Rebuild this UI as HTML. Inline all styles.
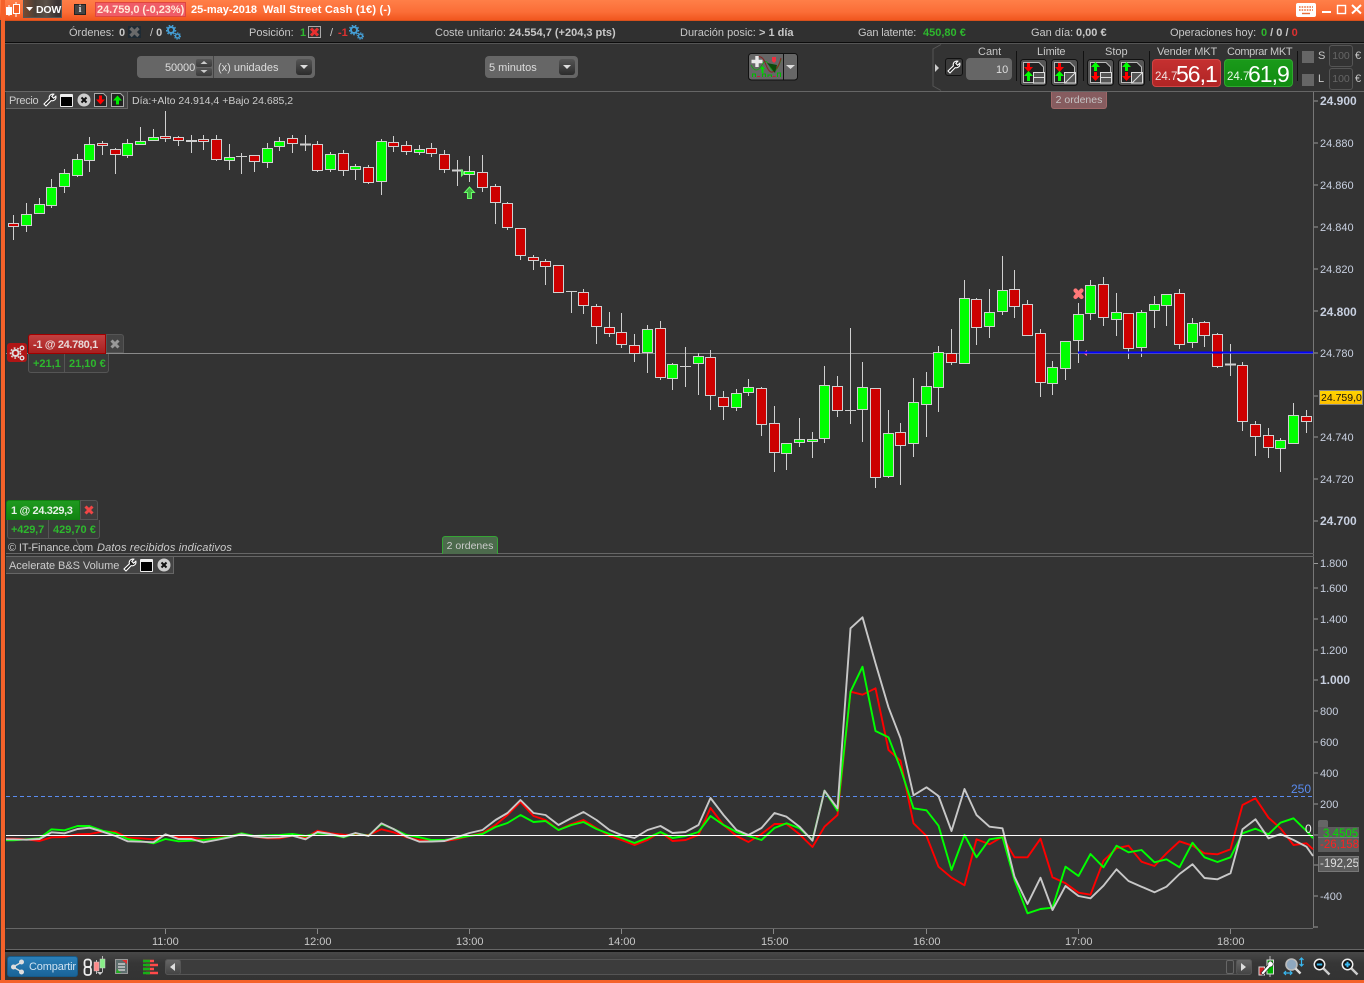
<!DOCTYPE html>
<html><head><meta charset="utf-8"><title>DOW</title>
<style>
html,body{margin:0;padding:0;background:#333}
body{width:1364px;height:983px;position:relative;overflow:hidden;font:11px/13px "Liberation Sans",Arial,sans-serif;color:#c8c8c8}
.a{position:absolute}
.t{position:absolute;white-space:nowrap;line-height:13px;margin-top:1px}
.b{font-weight:bold}
.g{color:#2db82d}.r{color:#e03030}
.ax{position:absolute;left:1320px;white-space:nowrap;color:#c8d0e0;font-size:11px;line-height:13px;margin-top:1px}
.btn{position:absolute;background:linear-gradient(#555,#444);border:1px solid #111;border-radius:3px;box-sizing:border-box}
.dd{position:absolute;width:16px;height:16px;background:linear-gradient(#555,#2c2c2c);border-radius:3px}
.dd:after{content:"";position:absolute;left:4px;top:6px;border:4px solid transparent;border-top:4px solid #ddd;border-bottom:0}
.sep{position:absolute;width:1px;height:30px;background:#111;top:51px}
svg{position:absolute;overflow:visible}
</style></head><body>
<svg width="0" height="0" style="left:0;top:0"><defs>
<symbol id="gears" viewBox="0 0 15 15"><circle cx="5" cy="5" r="3" fill="none" stroke="#459fd6" stroke-width="2"/><circle cx="5" cy="5" r="4.6" fill="none" stroke="#459fd6" stroke-width="1.4" stroke-dasharray="1.6 1.6"/><circle cx="11.5" cy="11" r="2" fill="none" stroke="#459fd6" stroke-width="1.4"/><circle cx="11.5" cy="11" r="3.2" fill="none" stroke="#459fd6" stroke-width="1" stroke-dasharray="1.2 1.2"/></symbol>
<symbol id="wr" viewBox="0 0 14 14"><path d="M12.8 3.2a3.6 3.6 0 0 1-4.6 4.4L3 13 1 11l5.4-5.2A3.6 3.6 0 0 1 10.8 1.2L8.8 3.4l1.8 1.8z" fill="#222" stroke="#fff" stroke-width="1.1"/></symbol>
<symbol id="tb" viewBox="0 0 27 27"><rect x=".5" y=".5" width="26" height="26" rx="3" fill="#555" stroke="#111"/><path d="M3.5 3.500H19L23.500 8V23.500H3.500z" fill="#222" stroke="#bbb"/></symbol>
</defs></svg>

<!-- frame -->
<div class="a" style="left:0;top:0;width:1364px;height:20px;background:linear-gradient(#ff7f48,#fb6d37 60%,#f1561e)"></div>
<div class="a" style="left:0;top:20px;width:1364px;height:1px;background:#d8501c"></div>
<div class="a" style="left:0;top:20px;width:1px;height:960px;background:#3a3a3a"></div>
<div class="a" style="left:1px;top:0;width:4px;height:983px;background:#f4622a"></div>
<div class="a" style="left:0;top:980px;width:1364px;height:3px;background:#f4622a"></div>
<div class="a" style="left:5px;top:21px;width:1359px;height:21px;background:#303030"></div>
<div class="a" style="left:5px;top:42px;width:1359px;height:1px;background:#0c0c0c"></div>
<div class="a" style="left:5px;top:43px;width:1359px;height:1px;background:#555"></div>
<div class="a" style="left:5px;top:44px;width:1359px;height:47px;background:#333"></div>
<div class="a" style="left:5px;top:91px;width:1359px;height:1px;background:#666"></div>

<!-- title bar -->
<svg style="left:5px;top:2px" width="16" height="15"><path d="M11 0v15" stroke="#fff"/><rect x="8.5" y="2.5" width="6" height="9" fill="#f4622a" stroke="#fff"/><path d="M4 3v11" stroke="#fff"/><rect x="1" y="5" width="6" height="8" fill="#fff"/></svg>
<div class="a" style="left:23px;top:0;width:39px;height:18px;box-sizing:border-box;background:linear-gradient(90deg,#7a4a30,#4a4038 30%,#5a5048 60%,#3a3434 90%);border:1px solid #555;border-top:0"></div>
<svg style="left:26px;top:7px" width="8" height="5"><path d="M0 0h7L3.5 4z" fill="#fff"/></svg>
<div class="t b" style="left:36px;top:3px;color:#fff;font-size:10.5px;letter-spacing:-.2px">DOW</div>
<div class="a" style="left:74px;top:4px;width:12px;height:11px;background:#444;border:1px solid #222;box-sizing:border-box;color:#ddd;font:bold 10px/10px 'Liberation Serif',serif;text-align:center">i</div>
<div class="a" style="left:95px;top:2px;width:91px;height:15px;box-sizing:border-box;background:#ef5c68;border:1px solid #e0453f"></div>
<div class="t b" style="left:97px;top:3px;color:#ffe9d8;letter-spacing:-.05px">24.759,0 (-0,23%)</div>
<div class="t b" style="left:191px;top:3px;color:#fff">25-may-2018</div>
<div class="t b" style="left:263px;top:3px;color:#fff;letter-spacing:.2px">Wall Street Cash (1€) (-)</div>
<svg style="left:1296px;top:3px" width="68" height="15"><rect x="0" y="0" width="20" height="14" rx="2" fill="#fff"/><path d="M3 4h14M3 7h14" stroke="#e8703a" stroke-width="1.4" stroke-dasharray="1.6 1"/><path d="M6 10.5h8" stroke="#e8703a" stroke-width="1.4"/><path d="M26 9h9" stroke="#fff" stroke-width="2"/><rect x="41.500" y="2.500" width="8" height="8" fill="none" stroke="#fff" stroke-width="1.4"/><path d="M56 2l9 8.500M65 2l-9 8.500" stroke="#fff" stroke-width="2"/></svg>

<!-- info row -->
<div class="t" style="left:69px;top:26px">Órdenes:</div>
<div class="t b" style="left:119px;top:26px">0</div>
<svg style="left:128px;top:26px" width="13" height="12"><rect width="13" height="12" fill="#1e2a33"/><path d="M2.5 2l8 8M10.5 2l-8 8" stroke="#6a6a6a" stroke-width="3.400"/></svg>
<div class="t" style="left:150px;top:26px">/ <b>0</b></div>
<svg style="left:166px;top:25px" width="15" height="15"><use href="#gears"/></svg>
<div class="t" style="left:249px;top:26px">Posición:</div>
<div class="t b g" style="left:300px;top:26px">1</div>
<svg style="left:308px;top:26px" width="13" height="12"><rect x=".5" y=".5" width="12" height="11" fill="#333" stroke="#aaa"/><path d="M3 2.5l7 7M10 2.5l-7 7" stroke="#e83030" stroke-width="3"/></svg>
<div class="t" style="left:330px;top:26px">/</div>
<div class="t b r" style="left:338px;top:26px">-1</div>
<svg style="left:349px;top:25px" width="15" height="15"><use href="#gears"/></svg>
<div class="t" style="left:435px;top:26px">Coste unitario:</div>
<div class="t b" style="left:509px;top:26px">24.554,7 (+204,3 pts)</div>
<div class="t" style="left:680px;top:26px">Duración posic:</div>
<div class="t b" style="left:759px;top:26px">&gt; 1 día</div>
<div class="t" style="left:858px;top:26px;letter-spacing:-.15px">Gan latente:</div>
<div class="t b g" style="left:923px;top:26px">450,80 €</div>
<div class="t" style="left:1031px;top:26px">Gan día:</div>
<div class="t b" style="left:1076px;top:26px">0,00 €</div>
<div class="t" style="left:1170px;top:26px">Operaciones hoy:</div>
<div class="t b" style="left:1261px;top:26px"><span class="g">0</span> / 0 / <span class="r">0</span></div>

<!-- toolbar left -->
<div class="a" style="left:137px;top:56px;width:178px;height:22px;background:#666;border-radius:4px"></div>
<div class="t" style="left:165px;top:61px;color:#ddd;letter-spacing:-.1px">50000</div>
<div class="a" style="left:196px;top:59px;width:16px;height:8px;background:linear-gradient(#555,#3a3a3a);border-radius:2px"></div>
<div class="a" style="left:196px;top:68px;width:16px;height:8px;background:linear-gradient(#555,#3a3a3a);border-radius:2px"></div>
<svg style="left:200px;top:61px" width="9" height="13"><path d="M4 0l3.5 3h-7zM4 12L.5 9h7z" fill="#ccc"/></svg>
<div class="a" style="left:213px;top:56px;width:1px;height:22px;background:#444"></div>
<div class="t" style="left:218px;top:61px;color:#ddd">(x) unidades</div>
<div class="dd" style="left:296px;top:59px"></div>
<div class="a" style="left:485px;top:56px;width:93px;height:22px;background:#666;border-radius:4px"></div>
<div class="t" style="left:489px;top:61px;color:#ddd">5 minutos</div>
<div class="dd" style="left:559px;top:59px"></div>
<svg style="left:748px;top:53px" width="50" height="28">
<rect x=".5" y=".5" width="49" height="26.500" rx="3" fill="#666" stroke="#111"/><path d="M35.500 1v26" stroke="#111"/>
<path d="M38 12h9l-4.500 4z" fill="#ddd"/>
<path d="M3 12q5 10 11 0q4-8 8 2q4 8 8 0q3-6 3-8" fill="none" stroke="#1c9c1c"/>
<path d="M9 4q6-2 9 8q4 10 8 6q5-4 7-13" fill="none" stroke="#8a2222"/>
<path d="M19 10l8 10 2-8z" fill="#0b4a0b"/>
<path d="M3.500 8.500h11M9 3v11" stroke="#e8e8e8" stroke-width="3.400"/>
<path d="M24 4h4v4l-2 2-2-2z" fill="#f03040"/>
<path d="M12 16l2.500-3 2.500 3h-1.500v4h-2v-4z" fill="#00dd00"/>
<path d="M4.500 24v-3h3v3M14.500 24v-3h3v3M20 24v-2h3.500v2M29.500 24v-4h3v4" fill="none" stroke="#00bb00"/>
<path d="M9 23.500h3M24.500 23.500h3" stroke="#c02040"/>
</svg>

<!-- trade panel -->
<svg style="left:932px;top:44px" width="22" height="47"><path d="M9 .5L1 5v37l8 4.500" fill="none" stroke="#555"/><path d="M3 20l4 4-4 4z" fill="#ccc"/></svg>
<div class="btn" style="left:945px;top:58px;width:18px;height:18px;background:#3a3a3a"></div>
<svg style="left:947px;top:60px" width="14" height="14"><use href="#wr"/></svg>
<div class="t" style="left:978px;top:45px">Cant</div>
<div class="a" style="left:966px;top:58px;width:46px;height:22px;background:#666;border-radius:4px"></div>
<div class="t" style="left:996px;top:63px;color:#ddd">10</div>
<div class="sep" style="left:1016px"></div><div class="sep" style="left:1083px"></div><div class="sep" style="left:1149px"></div><div class="sep" style="left:1297px"></div>
<div class="t" style="left:1037px;top:45px;letter-spacing:-.3px">Límite</div>
<div class="t" style="left:1105px;top:45px">Stop</div>
<div class="t" style="left:1157px;top:45px;letter-spacing:-.1px">Vender MKT</div>
<div class="t" style="left:1227px;top:45px;letter-spacing:-.35px">Comprar MKT</div>
<svg style="left:1020px;top:59px" width="27" height="27"><use href="#tb"/><path d="M7 4h3v4h3l-4.500 5L4 8h3z" fill="#f00"/><path d="M8.500 12l4.500 5h-3v5H7v-5H4z" fill="#0f0"/><rect x="13.500" y="13.500" width="11" height="10.500" fill="#555" stroke="#ddd"/><path d="M13.500 18.500h11" stroke="#ddd"/></svg>
<svg style="left:1051px;top:59px" width="27" height="27"><use href="#tb"/><path d="M7 4h3v4h3l-4.500 5L4 8h3z" fill="#f00"/><path d="M8.500 12l4.500 5h-3v5H7v-5H4z" fill="#0f0"/><rect x="13.500" y="13.500" width="11" height="10.500" fill="#555" stroke="#ddd"/><path d="M14 24l10-10" stroke="#ddd"/></svg>
<svg style="left:1087px;top:59px" width="27" height="27"><use href="#tb"/><path d="M8.500 3l4.500 5h-3v4H7V8H4z" fill="#0f0"/><path d="M7 13h3v4h3l-4.500 5L4 17h3z" fill="#f00"/><rect x="13.500" y="13.500" width="11" height="10.500" fill="#555" stroke="#ddd"/><path d="M13.500 18.500h11" stroke="#ddd"/></svg>
<svg style="left:1118px;top:59px" width="27" height="27"><use href="#tb"/><path d="M8.500 3l4.500 5h-3v4H7V8H4z" fill="#0f0"/><path d="M7 13h3v4h3l-4.500 5L4 17h3z" fill="#f00"/><rect x="13.500" y="13.500" width="11" height="10.500" fill="#555" stroke="#ddd"/><path d="M14 24l10-10" stroke="#ddd"/></svg>
<div class="a" style="left:1152px;top:59px;width:69px;height:28px;box-sizing:border-box;background:linear-gradient(#c53030,#b02525);border:1px solid #d04545;border-radius:4px"></div>
<div class="t" style="left:1155px;top:70px;font-size:11.500px;color:#f0e0e0">24.7</div>
<div class="t" style="left:1176px;top:60px;font-size:23px;line-height:26px;color:#fff;letter-spacing:-1px">56,1</div>
<div class="a" style="left:1224px;top:59px;width:69px;height:28px;box-sizing:border-box;background:linear-gradient(#1a9a1a,#118c11);border:1px solid #30a830;border-radius:4px"></div>
<div class="t" style="left:1227px;top:70px;font-size:11.500px;color:#e8f8e8">24.7</div>
<div class="t" style="left:1248px;top:60px;font-size:23px;line-height:26px;color:#fff;letter-spacing:-1px">61,9</div>
<div class="a" style="left:1302px;top:51px;width:12px;height:12px;background:#666"></div>
<div class="t" style="left:1318px;top:49px">S</div>
<div class="a" style="left:1329px;top:45px;width:24px;height:22px;box-sizing:border-box;border:1px solid #555;border-radius:3px;color:#666;text-align:center;line-height:20px;font-size:10.500px">100</div>
<div class="t" style="left:1355px;top:49px">€</div>
<div class="a" style="left:1302px;top:74px;width:12px;height:12px;background:#666"></div>
<div class="t" style="left:1318px;top:72px">L</div>
<div class="a" style="left:1329px;top:68px;width:24px;height:22px;box-sizing:border-box;border:1px solid #555;border-radius:3px;color:#666;text-align:center;line-height:21px;font-size:10.500px">100</div>
<div class="t" style="left:1355px;top:72px">€</div>

<!-- chart svg -->
<svg style="left:0;top:0" width="1364" height="983">
<path d="M1313.5 92V928" stroke="#777"/>
<path d="M6 553.500H1314M6 556.500H1314" stroke="#666"/>
<path d="M6 353.500H1313" stroke="#8a8a8a"/>
<path d="M6 928.500H1313M6 949.500H1364" stroke="#666"/>
<path d="M5.500 92V928" stroke="#2a2a2a"/>
<path d="M165.500 929v5M317.500 929v5M469.500 929v5M621.500 929v5M773.500 929v5M926.500 929v5M1078.500 929v5M1230.500 929v5" stroke="#888"/>
<path d="M1314 101h4M1314 143h4M1314 185h4M1314 227h4M1314 269h4M1314 311h4M1314 353h4M1314 437h4M1314 479h4M1314 521h4M1314 563.500h4M1314 588h4M1314 619h4M1314 650h4M1314 680h4M1314 711h4M1314 742h4M1314 773h4M1314 804h4M1314 835h4M1314 865h4M1314 896h4M1314 927h4M1314 396h4" stroke="#999" shape-rendering="crispEdges"/>
<g fill="none" stroke="#d0d0d0" shape-rendering="crispEdges">
<path d="M13.500 215V240M26.500 203V232M39.500 198V214M51.500 179V208M64.500 169V193M77.500 154V177M89.500 137V172M102.500 141V155M115.500 148V174M127.500 139V158M140.500 127V145M153.500 129V141M165.500 111V142M178.500 136V146M191.500 135V153M203.500 135V150M216.500 135V161M229.500 144V170M241.500 153V174M254.500 155V172M267.500 143V168M279.500 137V151M292.500 135V153M305.500 135V151M317.500 141V172M330.500 152V172M343.500 150V176M355.500 164V180M368.500 165V184M381.500 139V195M393.500 136V152M406.500 141V155M419.500 145V155M431.500 143V157M444.500 150V173M457.500 160V186M469.500 156V182M482.500 155V192M495.500 184V224M507.500 202V230M520.500 228V260M533.500 255V270M545.500 259V285M558.500 265V293M571.500 291V313M583.500 289V314M596.500 304V344M609.500 312V337M621.500 313V348M634.500 334V362M647.500 325V373M660.500 321V380M672.500 363V390M685.500 347V387M698.500 353V395M710.500 350V410M723.500 391V420M736.500 389V411M748.500 379V396M761.500 387V436M774.500 406V472M786.500 443V470M799.500 418V447M812.500 432V458M824.500 366V443M837.500 376V417M850.500 328V424M862.500 362V442M875.500 388V488M888.500 410V478M900.500 423V485M913.500 378V457M926.500 372V437M938.500 346V412M951.500 329V365M964.500 280V364M976.500 298V345M989.500 289V338M1002.500 256V315M1014.500 270V318M1027.500 300V336M1040.500 329V397M1052.500 361V395M1065.500 341V380M1078.500 303V363M1090.500 280V320M1103.500 277V326M1116.500 293V336M1128.500 313V359M1141.500 310V357M1154.500 296V328M1166.500 294V326M1179.500 289V349M1192.500 318V348M1204.500 321V347M1217.500 333V368M1230.500 344V376M1242.500 362V431M1255.500 421V456M1268.500 428V458M1280.500 438V472M1293.500 403V444M1306.500 410V433"/>
<path d="M236 156.500h11M680 366.500h11M845 410.500h11M566 291.500h11"/>
<path stroke-width="2" d="M186 141h11M300 144.500h11M452 170.500h11M1225 364.500h11"/>
<path fill="#cc0000" d="M8.500 223.500h10V226.500h-10zM97.500 143.500h10V145.500h-10zM110.500 149.500h10V154.500h-10zM160.500 136.500h10V138.500h-10zM173.500 137.500h10V140.500h-10zM198.500 139.500h10V141.500h-10zM211.500 139.500h10V159.500h-10zM249.500 155.500h10V161.500h-10zM287.500 138.500h10V143.500h-10zM312.500 144.500h10V170.500h-10zM338.500 153.500h10V170.500h-10zM363.500 167.500h10V182.500h-10zM388.500 142.500h10V146.500h-10zM401.500 145.500h10V151.500h-10zM426.500 148.500h10V153.500h-10zM439.500 154.500h10V169.500h-10zM477.500 172.500h10V187.500h-10zM490.500 186.500h10V202.500h-10zM502.500 203.500h10V227.500h-10zM515.500 228.500h10V255.500h-10zM528.500 257.500h10V260.500h-10zM540.500 261.500h10V266.500h-10zM553.500 265.500h10V292.500h-10zM578.500 292.500h10V305.500h-10zM591.500 306.500h10V326.500h-10zM604.500 327.500h10V333.500h-10zM616.500 332.500h10V344.500h-10zM629.500 345.500h10V353.500h-10zM655.500 328.500h10V377.500h-10zM705.500 357.500h10V395.500h-10zM718.500 397.500h10V406.500h-10zM756.500 388.500h10V424.500h-10zM769.500 423.500h10V452.500h-10zM832.500 386.500h10V410.500h-10zM870.500 388.500h10V477.500h-10zM895.500 432.500h10V445.500h-10zM946.500 353.500h10V362.500h-10zM971.500 299.500h10V327.500h-10zM1009.500 289.500h10V306.500h-10zM1022.500 304.500h10V335.500h-10zM1035.500 333.500h10V382.500h-10zM1098.500 284.500h10V317.500h-10zM1123.500 313.500h10V348.500h-10zM1174.500 293.500h10V344.500h-10zM1199.500 322.500h10V335.500h-10zM1212.500 334.500h10V366.500h-10zM1237.500 365.500h10V421.500h-10zM1250.500 424.500h10V436.500h-10zM1263.500 435.500h10V447.500h-10zM1301.500 416.500h10V421.500h-10z"/>
<path fill="#00ff00" d="M21.500 214.500h10V225.500h-10zM34.500 204.500h10V213.500h-10zM46.500 187.500h10V205.500h-10zM59.500 173.500h10V186.500h-10zM72.500 159.500h10V175.500h-10zM84.500 144.500h10V160.500h-10zM122.500 143.500h10V155.500h-10zM135.500 141.500h10V144.500h-10zM148.500 137.500h10V140.500h-10zM224.500 157.500h10V160.500h-10zM262.500 148.500h10V162.500h-10zM274.500 141.500h10V146.500h-10zM325.500 154.500h10V169.500h-10zM350.500 166.500h10V169.500h-10zM376.500 141.500h10V181.500h-10zM414.500 149.500h10V152.500h-10zM464.500 171.500h10V174.500h-10zM642.500 329.500h10V352.500h-10zM667.500 364.500h10V378.500h-10zM693.500 356.500h10V363.500h-10zM731.500 393.500h10V407.500h-10zM743.500 387.500h10V392.500h-10zM781.500 443.500h10V453.500h-10zM794.500 439.500h10V442.500h-10zM807.500 439.500h10V441.500h-10zM819.500 385.500h10V438.500h-10zM857.500 387.500h10V409.500h-10zM883.500 433.500h10V476.500h-10zM908.500 402.500h10V443.500h-10zM921.500 386.500h10V404.500h-10zM933.500 352.500h10V387.500h-10zM959.500 298.500h10V363.500h-10zM984.500 312.500h10V326.500h-10zM997.500 290.500h10V311.500h-10zM1047.500 367.500h10V383.500h-10zM1060.500 341.500h10V368.500h-10zM1073.500 314.500h10V340.500h-10zM1085.500 285.500h10V313.500h-10zM1111.500 312.500h10V319.500h-10zM1136.500 312.500h10V347.500h-10zM1149.500 304.500h10V310.500h-10zM1161.500 294.500h10V305.500h-10zM1187.500 323.500h10V342.500h-10zM1275.500 440.500h10V448.500h-10zM1288.500 415.500h10V443.500h-10z"/>
</g>
<!-- arrow & markers -->
<path d="M469.500 187l-5 5.500h3v6h4v-6h3z" fill="#45b045" stroke="#66ff66"/>
<path d="M461.500 170v6l3-3z" fill="#55cc55" stroke="#66ff66"/>
<path d="M1075.500 290.500l6 6.500M1081.500 290.500l-6 6.500" stroke="#ff7878" stroke-width="4.200" stroke-linecap="round"/>
<path d="M1087 350l-4 3 4 3z" fill="#ff7090"/>
<path d="M1078 352.500H1313" stroke="#0000ff" stroke-width="2"/>
<!-- indicator -->
<path d="M6 796.500H1313" stroke="#5a8cf0" stroke-dasharray="4 3"/>
<g fill="none" stroke-width="1.900" stroke-linejoin="round">
<path stroke="#ff0000" d="M6 838.700L13.500 838.700 26.500 839.300 39.500 841 51.500 837.300 64.500 837 77.500 834.300 89.500 834 102.500 831.700 115.500 831.700 127.500 837.700 140.500 838.300 153.500 839.300 165.500 835 178.500 837.300 191.500 837.300 203.500 839.300 216.500 837.700 229.500 836.700 241.500 833.300 254.500 836.700 267.500 838.300 279.500 838.300 292.500 835.700 305.500 837.700 317.500 830.700 330.500 833.300 343.500 834.700 355.500 835 368.500 835 381.500 829.300 393.500 832.300 406.500 837.300 419.500 840 431.500 841 444.500 841 457.500 839 469.500 836 482.500 833 495.500 825 507.500 815 520.500 802 533.500 816 545.500 820 558.500 830 571.500 824 583.500 820 596.500 828 609.500 836 621.500 840 634.500 845 647.500 840 660.500 832 672.500 841 685.500 840 698.500 835 710.500 808 723.500 825 736.500 836 748.500 842 761.500 834 774.500 824 786.500 824 799.500 834.300 812.500 847 824.500 826.700 837.500 815 850.500 691.700 862.500 694.700 875.500 688.300 888.500 750 900.500 760.700 913.500 823.300 926.500 836 938.500 866.700 951.500 877.700 964.500 885.300 976.500 839.300 989.500 844.300 1002.500 836.700 1014.500 857.300 1027.500 857.300 1040.500 838.700 1052.500 877.300 1065.500 883.300 1078.500 892.700 1090.500 894.700 1103.500 860.700 1116.500 848.300 1128.500 845.700 1141.500 861.700 1154.500 866 1166.500 853.300 1179.500 841.300 1192.500 845.700 1204.500 853.300 1217.500 854.300 1230.500 849.300 1242.500 805 1255.500 798.300 1268.500 817.700 1280.500 828.300 1293.500 845 1306.500 843.300 1313 849.300"/>
<path stroke="#00ff00" d="M6 840.300L13.500 840.300 26.500 839.300 39.500 838.300 51.500 829.300 64.500 830.300 77.500 826 89.500 826 102.500 830.700 115.500 833.300 127.500 839 140.500 841 153.500 843.300 165.500 839 178.500 841.300 191.500 840.700 203.500 840 216.500 838.700 229.500 836.700 241.500 833.300 254.500 836 267.500 835.300 279.500 835 292.500 834 305.500 836 317.500 833.300 330.500 834.300 343.500 837.300 355.500 833.300 368.500 835.700 381.500 824 393.500 829 406.500 835 419.500 837.300 431.500 840 444.500 840 457.500 838 469.500 836 482.500 834 495.500 827 507.500 823 520.500 815 533.500 822 545.500 821 558.500 830 571.500 825 583.500 822 596.500 829 609.500 834 621.500 838 634.500 843 647.500 838 660.500 832 672.500 838 685.500 836 698.500 832 710.500 816 723.500 825 736.500 832 748.500 836 761.500 840 774.500 828 786.500 823.300 799.500 828.300 812.500 840 824.500 790.700 837.500 810.700 850.500 691.700 862.500 666.700 875.500 731 888.500 737.300 900.500 768.300 913.500 808.300 926.500 810.300 938.500 825.700 951.500 870 964.500 835 976.500 857.300 989.500 839.300 1002.500 837.300 1014.500 880 1027.500 913.300 1040.500 909 1052.500 907.700 1065.500 866.700 1078.500 876 1090.500 854 1103.500 867.300 1116.500 845.700 1128.500 852.300 1141.500 850 1154.500 862.300 1166.500 859.300 1179.500 867.300 1192.500 842.700 1204.500 857.300 1217.500 862 1230.500 857.300 1242.500 833.300 1255.500 828.700 1268.500 834.300 1280.500 822.700 1293.500 818.300 1306.500 831 1313 838.300"/>
<path stroke="#c8c8c8" d="M6 839.300L13.500 839.300 26.500 839.700 39.500 839 51.500 832.300 64.500 833.300 77.500 829 89.500 827.700 102.500 831.700 115.500 836 127.500 841.300 140.500 841.700 153.500 842.300 165.500 834.300 178.500 839 191.500 839 203.500 842.300 216.500 840 229.500 837.300 241.500 834.300 254.500 836.700 267.500 837.700 279.500 837.300 292.500 835.700 305.500 839.300 317.500 832 330.500 834 343.500 836.700 355.500 833 368.500 836 381.500 823.300 393.500 829 406.500 836.700 419.500 841.700 431.500 841.500 444.500 841 457.500 837 469.500 833 482.500 830 495.500 820 507.500 813 520.500 800 533.500 813 545.500 815 558.500 825 571.500 818 583.500 812 596.500 820 609.500 830 621.500 835 634.500 838 647.500 830 660.500 826 672.500 833 685.500 832 698.500 825 710.500 798 723.500 815 736.500 830 748.500 835 761.500 828 774.500 813 786.500 816.700 799.500 826.700 812.500 840.700 824.500 790.700 837.500 808.300 850.500 628.300 862.500 617.300 875.500 663.300 888.500 707.300 900.500 738.300 913.500 795.300 926.500 787.300 938.500 796 951.500 831 964.500 789 976.500 815 989.500 826.700 1002.500 828.300 1014.500 876.700 1027.500 904 1040.500 877.700 1052.500 910 1065.500 886 1078.500 896 1090.500 898.300 1103.500 885.700 1116.500 869.300 1128.500 881 1141.500 886.700 1154.500 892.300 1166.500 886.700 1179.500 874 1192.500 864.300 1204.500 878 1217.500 879.300 1230.500 873.300 1242.500 829.300 1255.500 819.300 1268.500 838.300 1280.500 834 1293.500 840 1306.500 846.700 1313 856"/>
</g>
<path d="M6 835.500H1313" stroke="#fff" shape-rendering="crispEdges"/>
</svg>

<!-- axis labels -->
<div class="ax b" style="top:94px;font-size:12px">24.900</div>
<div class="ax" style="top:137px">24.880</div>
<div class="ax" style="top:179px">24.860</div>
<div class="ax" style="top:221px">24.840</div>
<div class="ax" style="top:263px">24.820</div>
<div class="ax b" style="top:305px;font-size:12px">24.800</div>
<div class="ax" style="top:347px">24.780</div>
<div class="ax" style="top:431px">24.740</div>
<div class="ax" style="top:473px">24.720</div>
<div class="ax b" style="top:514px;font-size:12px">24.700</div>
<div class="a" style="left:1319px;top:390px;width:44px;height:15px;box-sizing:border-box;background:linear-gradient(#ffd400,#ffc000);border:1px solid #888;color:#111;font-size:10.500px;line-height:15px;white-space:nowrap;overflow:hidden;padding-left:1px">24.759,0</div>

<div class="ax" style="top:557px">1.800</div>
<div class="ax" style="top:582px">1.600</div>
<div class="ax" style="top:613px">1.400</div>
<div class="ax" style="top:644px">1.200</div>
<div class="ax b" style="top:673px;font-size:12px">1.000</div>
<div class="ax" style="top:705px">800</div>
<div class="ax" style="top:736px">600</div>
<div class="ax" style="top:767px">400</div>
<div class="ax" style="top:798px">200</div>
<div class="ax" style="top:890px">-400</div>
<div class="t" style="left:1291px;top:782px;color:#5a8cf0;font-size:12px">250</div>
<div class="t" style="left:1305px;top:822px;color:#eee;font-size:12px">0</div>
<div class="a" style="left:1318px;top:820px;width:10px;height:8px;background:#666;border-radius:2px 2px 0 0"></div>
<div class="a" style="left:1318px;top:827px;width:41px;height:11px;background:#5c5c5c;overflow:hidden;color:#00e000;font-size:11.500px;line-height:14px;white-space:nowrap;text-indent:5px">3,4505</div>
<div class="a" style="left:1318px;top:837px;width:41px;height:15px;background:#5c5c5c;border-top:1px solid #777;box-sizing:border-box;color:#ff2020;font-size:11.500px;line-height:14px;white-space:nowrap;padding-left:2px">-26,158</div>
<div class="a" style="left:1318px;top:856px;width:41px;height:16px;background:#5c5c5c;border:1px solid #777;box-sizing:border-box;color:#ddd;font-size:11.500px;line-height:15px;white-space:nowrap;padding-left:1px;overflow:hidden">-192,25</div>

<!-- price tab -->
<div class="a" style="left:6px;top:92px;width:122px;height:17px;box-sizing:border-box;background:#444;border-right:1px solid #666;border-bottom:1px solid #666"></div>
<div class="t" style="left:9px;top:94px;color:#ccc;letter-spacing:-.3px">Precio</div>
<svg style="left:43px;top:93px" width="14" height="14"><use href="#wr"/></svg>
<div class="a" style="left:60px;top:94px;width:13px;height:13px;box-sizing:border-box;background:#000;border:1px solid #eee;border-top:3px solid #eee;border-radius:1px"></div>
<svg style="left:77px;top:93px" width="14" height="14"><circle cx="7" cy="7" r="6.500" fill="#ccc"/><path d="M4.500 4.500l5 5M9.500 4.500l-5 5" stroke="#111" stroke-width="2"/></svg>
<svg style="left:94px;top:93px" width="13" height="14"><path d="M.5.500H9.500L12.500 3.500V13.500H.5z" fill="#222" stroke="#aaa"/><path d="M5 2.500h3v4h3l-4.500 5L2 6.500h3z" fill="#f00"/></svg>
<svg style="left:111px;top:93px" width="13" height="14"><path d="M.5.500H9.500L12.500 3.500V13.500H.5z" fill="#222" stroke="#aaa"/><path d="M6.500 2.500l4.500 5H8v4H5v-4H2z" fill="#0e0"/></svg>
<div class="t" style="left:132px;top:94px;font-size:10.500px;color:#ccc">Día:+Alto 24.914,4 +Bajo 24.685,2</div>
<div class="a" style="left:1051px;top:92px;width:56px;height:17px;box-sizing:border-box;background:#865c5f;border:1px solid #a06868;border-top:0;border-radius:0 0 3px 3px;text-align:center;line-height:16px;color:#c4c4c4;font-size:10.500px">2 ordenes</div>

<!-- position labels -->
<div class="a" style="left:7px;top:343px;width:20px;height:19px;background:#b01515;border-radius:3px"></div>
<svg style="left:9px;top:344px" width="17" height="17"><circle cx="6.500" cy="9" r="3" fill="none" stroke="#ddd" stroke-width="2"/><circle cx="6.500" cy="9" r="5" fill="none" stroke="#ddd" stroke-width="1.500" stroke-dasharray="1.800 1.800"/><circle cx="13" cy="4" r="1.800" fill="none" stroke="#ddd" stroke-width="1.400"/><circle cx="13" cy="14" r="1.800" fill="none" stroke="#ddd" stroke-width="1.400"/></svg>
<div class="a" style="left:28px;top:334px;width:78px;height:20px;box-sizing:border-box;background:linear-gradient(#c24040,#a82020);border:1px solid #a00000;border-radius:3px 0 0 0"></div>
<div class="t b" style="left:33px;top:338px;color:#e8d8d8;letter-spacing:-.35px">-1 @ 24.780,1</div>
<div class="a" style="left:106px;top:334px;width:18px;height:19px;box-sizing:border-box;background:#444;border:1px solid #555;border-radius:0 3px 0 0"></div>
<svg style="left:110px;top:339px" width="10" height="10"><path d="M1.500 1.500l7 7M8.500 1.500l-7 7" stroke="#999" stroke-width="3"/></svg>
<div class="a" style="left:28px;top:354px;width:81px;height:19px;box-sizing:border-box;background:#3a3a3a;border:1px solid #555;border-top:0;border-radius:0 0 3px 3px"></div>
<div class="a" style="left:64px;top:354px;width:1px;height:18px;background:#555"></div>
<div class="t b g" style="left:33px;top:357px;font-size:11px">+21,1</div>
<div class="t b g" style="left:69px;top:357px;font-size:11px">21,10 €</div>

<div class="a" style="left:6px;top:500px;width:74px;height:20px;box-sizing:border-box;background:linear-gradient(#1f9a1f,#118411);border:1px solid #108010;border-radius:3px 0 0 0"></div>
<div class="t b" style="left:11px;top:504px;color:#e8f0e8;letter-spacing:-.35px">1 @ 24.329,3</div>
<div class="a" style="left:80px;top:500px;width:18px;height:20px;box-sizing:border-box;background:#3d3d3d;border:1px solid #555;border-radius:0 3px 0 0"></div>
<svg style="left:84px;top:505px" width="10" height="10"><path d="M1.500 1.500l7 7M8.500 1.500l-7 7" stroke="#f04545" stroke-width="3"/></svg>
<div class="a" style="left:7px;top:520px;width:93px;height:19px;box-sizing:border-box;background:#3a3a3a;border:1px solid #555;border-top:0;border-radius:0 0 3px 3px"></div>
<div class="a" style="left:48px;top:520px;width:1px;height:18px;background:#555"></div>
<div class="t b g" style="left:11px;top:523px;letter-spacing:-.15px">+429,7</div>
<div class="t b g" style="left:53px;top:523px">429,70 €</div>
<svg style="left:75px;top:539px" width="10" height="15"><path d="M1 0l6 14" stroke="#666"/></svg>
<div class="t" style="left:8px;top:541px;color:#ccc;letter-spacing:-.12px">© IT-Finance.com</div>
<div class="t" style="left:97px;top:541px;color:#ccc;font-style:italic;letter-spacing:.18px">Datos recibidos indicativos</div>
<div class="a" style="left:442px;top:536px;width:56px;height:18px;box-sizing:border-box;background:#4c6a4c;border:1px solid #35a535;border-bottom:0;border-radius:3px 3px 0 0;text-align:center;line-height:18px;color:#ccc;font-size:10.500px">2 ordenes</div>

<!-- indicator tab -->
<div class="a" style="left:6px;top:557px;width:168px;height:17px;box-sizing:border-box;background:#444;border-right:1px solid #666;border-bottom:1px solid #666"></div>
<div class="t" style="left:9px;top:559px;color:#ccc;letter-spacing:-.05px">Acelerate B&amp;S Volume</div>
<svg style="left:123px;top:558px" width="14" height="14"><use href="#wr"/></svg>
<div class="a" style="left:140px;top:559px;width:13px;height:13px;box-sizing:border-box;background:#000;border:1px solid #eee;border-top:3px solid #eee;border-radius:1px"></div>
<svg style="left:157px;top:558px" width="14" height="14"><circle cx="7" cy="7" r="6.500" fill="#ccc"/><path d="M4.500 4.500l5 5M9.500 4.500l-5 5" stroke="#111" stroke-width="2"/></svg>

<!-- time axis -->
<div class="t" style="left:152px;top:935px">11:00</div>
<div class="t" style="left:304px;top:935px">12:00</div>
<div class="t" style="left:456px;top:935px">13:00</div>
<div class="t" style="left:608px;top:935px">14:00</div>
<div class="t" style="left:761px;top:935px">15:00</div>
<div class="t" style="left:913px;top:935px">16:00</div>
<div class="t" style="left:1065px;top:935px">17:00</div>
<div class="t" style="left:1217px;top:935px">18:00</div>

<!-- bottom bar -->
<div class="a" style="left:5px;top:950px;width:1359px;height:2px;background:#111"></div>
<div class="a" style="left:5px;top:952px;width:1359px;height:28px;background:linear-gradient(#484848,#363636 40%,#333)"></div>
<div class="a" style="left:7px;top:956px;width:71px;height:21px;box-sizing:border-box;background:linear-gradient(#2a7fb8,#1a6498);border:1px solid #175a88;border-radius:3px"></div>
<svg style="left:10px;top:958px" width="15" height="17"><path d="M3 9l9-5M3 9l9 5" stroke="#ddd" stroke-width="1.400"/><circle cx="3.500" cy="9" r="2.500" fill="#ddd"/><circle cx="11.500" cy="4" r="2.500" fill="#ddd"/><circle cx="11.500" cy="14" r="2.500" fill="#ddd"/></svg>
<div class="t" style="left:29px;top:960px;color:#cfe3f2;letter-spacing:-.15px">Compartir</div>
<svg style="left:83px;top:956px" width="24" height="23"><rect x="1.500" y="3.500" width="6.500" height="7.500" rx="2.500" fill="none" stroke="#eee" stroke-width="1.800"/><rect x="1.500" y="11" width="6.500" height="8" rx="2.500" fill="none" stroke="#eee" stroke-width="1.800"/><path d="M13.500 4v14" stroke="#bbb"/><rect x="11" y="6" width="5" height="9" fill="#ff8a8a" stroke="#ccc" stroke-width=".5"/><path d="M19.500 0v16" stroke="#bbb"/><rect x="17" y="3" width="5" height="9" fill="#88ee88" stroke="#ccc" stroke-width=".5"/><path d="M14 16h6l-3 3z" fill="#ccc"/></svg>
<svg style="left:115px;top:959px" width="14" height="16"><rect x=".5" y=".5" width="12" height="14" fill="#5e6e6e" stroke="#999"/><path d="M3 5h7M3 8h7M3 11h7" stroke="#ccc" stroke-width="1.400"/><path d="M7 1h5v4z" fill="#e03030"/><path d="M1 14h5l-4-4z" fill="#20b020"/></svg>
<svg style="left:142px;top:959px" width="17" height="17"><path d="M1 2h11M4 6h12M1 10h11M4 14h12" stroke="#ff4a4a" stroke-width="2.500"/><path d="M1 2h7M1 6h7M1 10h7M1 14h7" stroke="#16b016" stroke-width="2.500"/></svg>
<div class="a" style="left:165px;top:959px;width:1087px;height:16px;box-sizing:border-box;background:#3c3c3c;border:1px solid #555;border-radius:3px"></div>
<div class="a" style="left:165px;top:959px;width:16px;height:16px;box-sizing:border-box;background:linear-gradient(#666,#444);border:1px solid #555;border-radius:3px"></div>
<svg style="left:170px;top:963px" width="6" height="8"><path d="M5 0v8L0 4z" fill="#ddd"/></svg>
<div class="a" style="left:1226px;top:960px;width:8px;height:14px;box-sizing:border-box;border:1px solid #666;border-radius:2px"></div>
<div class="a" style="left:1236px;top:959px;width:16px;height:16px;box-sizing:border-box;background:linear-gradient(#666,#444);border:1px solid #555;border-radius:3px"></div>
<svg style="left:1241px;top:963px" width="6" height="8"><path d="M0 0v8l5-4z" fill="#ddd"/></svg>
<svg style="left:1257px;top:956px" width="18" height="21"><path d="M13 0v21" stroke="#bbb"/><rect x="10" y="4" width="6.500" height="14" fill="#00b000" stroke="#ddd"/><rect x="2" y="11" width="5.500" height="8" fill="#d02020" stroke="#ddd"/><path d="M14 5a3 3 0 0 0-3 4L4 17l2 2 7-8a3 3 0 0 0 3-4z" fill="#fff" stroke="#222" stroke-width=".6"/></svg>
<svg style="left:1284px;top:957px" width="20" height="20"><circle cx="7.500" cy="7.500" r="5.500" fill="#8fa8c0" stroke="#bbb" stroke-width="1.600"/><path d="M11.500 11.500l5 5" stroke="#ddd" stroke-width="2.400"/><path d="M17.500 1v8M15.500 3l2-2 2 2M15.500 7l2 2 2-2M0 16h8M2 14l-2 2 2 2M6 14l2 2-2 2" stroke="#38b8f0" fill="none" stroke-width="1.200"/></svg>
<svg style="left:1313px;top:958px" width="18" height="18"><circle cx="6.500" cy="6.500" r="5.200" fill="#111" stroke="#eee" stroke-width="1.500"/><path d="M3.800 6.500h5.400" stroke="#38b8f0" stroke-width="2"/><path d="M10.500 10.500l6 6" stroke="#ccc" stroke-width="2.400"/></svg>
<svg style="left:1341px;top:958px" width="18" height="18"><circle cx="6.500" cy="6.500" r="5.200" fill="#111" stroke="#eee" stroke-width="1.500"/><path d="M3.800 6.500h5.400M6.500 3.800v5.400" stroke="#38b8f0" stroke-width="2"/><path d="M10.500 10.500l6 6" stroke="#ccc" stroke-width="2.400"/></svg>
</body></html>
